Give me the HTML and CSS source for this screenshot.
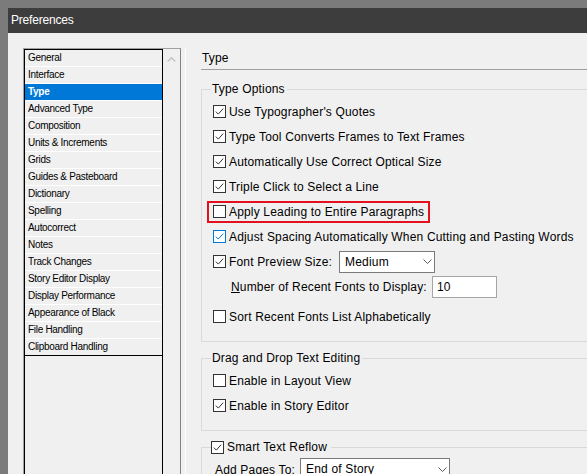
FILE: index.html
```html
<!DOCTYPE html>
<html>
<head>
<meta charset="utf-8">
<title>Preferences</title>
<link rel="stylesheet" href="styles.css">
</head>
<body>
<div class="window">
  <div class="titlebar">Preferences</div>
  <div class="content">
    <div class="sidebar">
      <ul class="navlist">
        <li>General</li>
        <li>Interface</li>
        <li class="selected">Type</li>
        <li>Advanced Type</li>
        <li>Composition</li>
        <li>Units &amp; Increments</li>
        <li>Grids</li>
        <li>Guides &amp; Pasteboard</li>
        <li>Dictionary</li>
        <li>Spelling</li>
        <li>Autocorrect</li>
        <li>Notes</li>
        <li>Track Changes</li>
        <li>Story Editor Display</li>
        <li>Display Performance</li>
        <li>Appearance of Black</li>
        <li>File Handling</li>
        <li>Clipboard Handling</li>
      </ul>
      <div class="scrollbar">
        <svg width="9" height="5" viewBox="0 0 9 5"><path d="M0.7 4.5 L4.5 0.8 L8.3 4.5" fill="none" stroke="#c2c2c2" stroke-width="1.4"/></svg>
      </div>
    </div>
    <div class="splitter"></div>
    <div class="panel">
      <div class="panel-title">Type</div>

      <fieldset class="group">
        <legend>Type Options</legend>
        <div class="row"><span class="cb"><svg width="11" height="11" viewBox="0 0 11 11"><path d="M1.8 5.6 L4.3 8.1 L9.2 2.6" fill="none" stroke="#333" stroke-width="1"/></svg></span><span>Use Typographer's Quotes</span></div>
        <div class="row"><span class="cb"><svg width="11" height="11" viewBox="0 0 11 11"><path d="M1.8 5.6 L4.3 8.1 L9.2 2.6" fill="none" stroke="#333" stroke-width="1"/></svg></span><span>Type Tool Converts Frames to Text Frames</span></div>
        <div class="row"><span class="cb"><svg width="11" height="11" viewBox="0 0 11 11"><path d="M1.8 5.6 L4.3 8.1 L9.2 2.6" fill="none" stroke="#333" stroke-width="1"/></svg></span><span>Automatically Use Correct Optical Size</span></div>
        <div class="row"><span class="cb"><svg width="11" height="11" viewBox="0 0 11 11"><path d="M1.8 5.6 L4.3 8.1 L9.2 2.6" fill="none" stroke="#333" stroke-width="1"/></svg></span><span>Triple Click to Select a Line</span></div>
        <div class="row"><span class="highlight"><span class="cb"></span><span>Apply Leading to Entire Paragraphs</span></span></div>
        <div class="row"><span class="cb hover"><svg width="11" height="11" viewBox="0 0 11 11"><path d="M1.8 5.6 L4.3 8.1 L9.2 2.6" fill="none" stroke="#0078d7" stroke-width="1"/></svg></span><span>Adjust Spacing Automatically When Cutting and Pasting Words</span></div>
        <div class="row"><span class="cb"><svg width="11" height="11" viewBox="0 0 11 11"><path d="M1.8 5.6 L4.3 8.1 L9.2 2.6" fill="none" stroke="#333" stroke-width="1"/></svg></span><span>Font Preview Size:</span>
          <span class="select select-preview"><span>Medium</span><svg width="9" height="5" viewBox="0 0 9 5"><path d="M0.5 0.5 L4.5 4.5 L8.5 0.5" fill="none" stroke="#5a5a5a" stroke-width="1"/></svg></span>
        </div>
        <div class="row row-number"><span class="indent"><span class="u">N</span>umber of Recent Fonts to Display:</span><span class="input">10</span></div>
        <div class="row"><span class="cb"></span><span>Sort Recent Fonts List Alphabetically</span></div>
      </fieldset>

      <fieldset class="group">
        <legend>Drag and Drop Text Editing</legend>
        <div class="row"><span class="cb"></span><span>Enable in Layout View</span></div>
        <div class="row"><span class="cb"><svg width="11" height="11" viewBox="0 0 11 11"><path d="M1.8 5.6 L4.3 8.1 L9.2 2.6" fill="none" stroke="#333" stroke-width="1"/></svg></span><span>Enable in Story Editor</span></div>
      </fieldset>

      <fieldset class="group">
        <legend class="legend-check"><span class="cb"><svg width="11" height="11" viewBox="0 0 11 11"><path d="M1.8 5.6 L4.3 8.1 L9.2 2.6" fill="none" stroke="#333" stroke-width="1"/></svg></span><span>Smart Text Reflow</span></legend>
        <div class="row"><span class="label-add">Add Pages To:</span>
          <span class="select select-pages"><span>End of Story</span><svg width="9" height="5" viewBox="0 0 9 5"><path d="M0.5 0.5 L4.5 4.5 L8.5 0.5" fill="none" stroke="#5a5a5a" stroke-width="1"/></svg></span>
        </div>
      </fieldset>
    </div>
  </div>
</div>
</body>
</html>
```
FILE: styles.css
```css
html, body {
  margin: 0;
  padding: 0;
}
body {
  background: #7b7b7b;
  overflow: hidden;
  font-family: "Liberation Sans", Arial, sans-serif;
}
.window {
  margin: 8px 0 0 8px;
  width: 579px;
  height: 466px;
  background: #f0f0f0;
  display: flex;
  flex-direction: column;
  overflow: hidden;
}
.titlebar {
  flex: none;
  height: 25px;
  line-height: 25px;
  background: #3d3d3d;
  color: #ffffff;
  font-size: 12px;
  letter-spacing: -0.2px;
  padding-left: 3px;
}
.content {
  flex: 1;
  min-height: 0;
  display: flex;
  padding: 15px 0 0 15px;
}
.sidebar {
  flex: none;
  width: 158px;
  box-sizing: border-box;
  border: 1px solid #a0a0a0;
  border-right-color: #828282;
  border-bottom: none;
  display: flex;
}
.navlist {
  list-style: none;
  margin: 0;
  padding: 0;
  width: 139px;
  flex: none;
  box-sizing: border-box;
  border: 1px solid #000;
  border-bottom: none;
  font-size: 10px;
  letter-spacing: -0.3px;
  color: #000;
}
.navlist li {
  height: 16px;
  line-height: 16px;
  padding-left: 3px;
  border-bottom: 1px solid #ffffff;
  white-space: nowrap;
}
.navlist li.selected {
  background: #0078d7;
  color: #ffffff;
  font-weight: bold;
}
.navlist li:last-child {
  border-bottom-color: #000;
}
.scrollbar {
  flex: 1;
  display: flex;
  justify-content: center;
  align-items: flex-start;
  padding-top: 8px;
}
.scrollbar svg {
  display: block;
}
.splitter {
  flex: none;
  width: 1px;
  background: #fbfbfb;
  margin: 0 15px 0 4px;
}
.panel {
  flex: none;
  width: 440px;
  font-size: 12px;
  line-height: 16px;
  letter-spacing: 0.17px;
  color: #000;
}
.panel-title {
  height: 21px;
  line-height: 21px;
  padding-left: 1px;
  border-bottom: 1px solid #a0a0a0;
}
.group {
  margin: 11px 0 0 0;
  padding: 2px 0 12px 11px;
  border: 1px solid #d9d9d9;
  min-width: 0;
}
.group + .group {
  margin-top: 8px;
}
.group legend {
  padding: 0 2px 0 1px;
  margin-left: -2px;
  line-height: 16px;
}
.group legend.legend-check {
  display: flex;
  align-items: center;
  margin-left: -2px;
  padding: 0 4px 0 0;
}
.row {
  display: flex;
  align-items: center;
  height: 25px;
  white-space: nowrap;
}
.row-number {
  margin-bottom: 5px;
}
.cb {
  flex: none;
  width: 13px;
  height: 13px;
  box-sizing: border-box;
  border: 1px solid #333333;
  background: #ffffff;
  margin-right: 3px;
  display: flex;
}
.cb svg {
  display: block;
}
.cb.hover {
  border-color: #0078d7;
}
.highlight {
  display: flex;
  align-items: center;
  border: 2px solid #e3101e;
  padding: 1px 4px 1px 4px;
  margin: 0 -6px 0 -6px;
}
.select {
  display: flex;
  align-items: center;
  justify-content: space-between;
  box-sizing: border-box;
  height: 22px;
  border: 1px solid #7a7a7a;
  background: #ffffff;
  padding: 0 2px 0 5px;
}
.select svg {
  display: block;
}
.select-preview {
  width: 96px;
  margin-left: 7px;
}
.indent {
  margin-left: 18px;
}
.u {
  text-decoration: underline;
}
.input {
  box-sizing: border-box;
  width: 65px;
  height: 22px;
  line-height: 20px;
  border: 1px solid #a5a5a5;
  background: #ffffff;
  padding-left: 4px;
  margin-left: 5px;
}
.label-add {
  margin-left: 2px;
}
.select-pages {
  width: 150px;
  margin-left: 5px;
  align-self: flex-start;
  margin-top: 1px;
}
```
